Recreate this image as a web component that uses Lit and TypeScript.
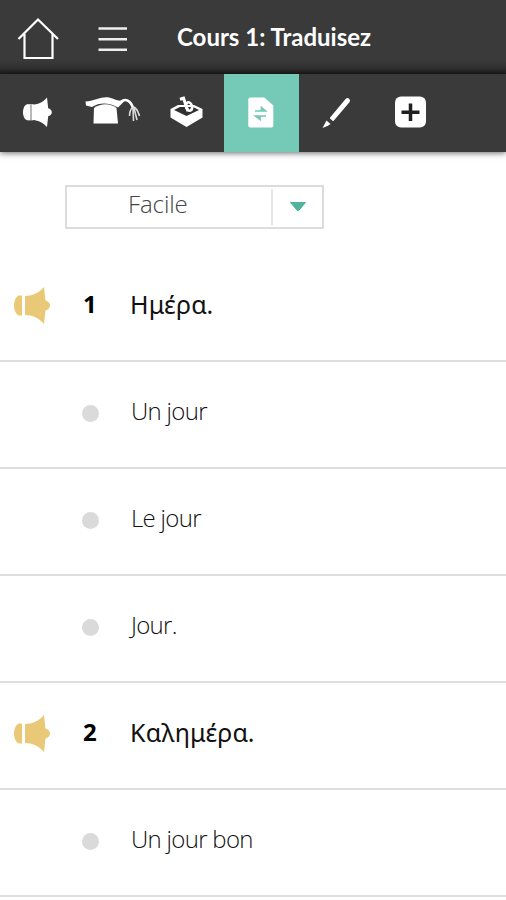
import { LitElement, html, css, svg } from "lit";
import { customElement } from "lit/decorators.js";
import { classMap } from "lit/directives/class-map.js";

interface Row {
  kind: "question" | "answer";
  text: string;
  num?: string;
}

const rows: Row[] = [
  { kind: "question", num: "1", text: "Ημέρα." },
  { kind: "answer", text: "Un jour" },
  { kind: "answer", text: "Le jour" },
  { kind: "answer", text: "Jour." },
  { kind: "question", num: "2", text: "Καλημέρα." },
  { kind: "answer", text: "Un jour bon" },
];

const horn = svg`
  <path d="M8 8.500H5C2 9.500 0 13.500 0 18.500S2 27.500 5 28.500H8Z"/>
  <path d="M11 9C18 9 25 6 30 0L31.500 13.500C34 14 36 16 36 18.500S34 23 31.500 23.500L30 37C25 31 18 28 11 28Z"/>`;

const tabs = [
  svg`<g transform="translate(23 23.500) scale(.8)">${horn}<path d="M7 8.500h6v20h-6z"/><path d="M10 9v19" stroke="#777" stroke-width="1.300"/></g>`,
  svg`<g><path d="M10.500 27.500C19 27 27 22 34 23.500C40 25 44 28 50 26.500L43 33.500C34 28.500 25 28 17 33L11 31.500Z"/>
    <path d="M19 34C26 29 35 29 41.500 34L43 49.500H18.500Z"/>
    <path d="M46 27.500C51 24 56 27 58 34" fill="none" stroke="#fff" stroke-width="2.600"/>
    <path d="M58 33C54.500 36 54.500 39 54.500 42M58 34L58.500 47M59 34L62 46M59 33C62.500 35 63 38 64.500 42" fill="none" stroke="#ddd" stroke-width="1.600"/></g>`,
  svg`<g><path d="M21.500 35L29 31H45L53.500 35V43.500L37.500 53L21.500 43.500Z"/>
    <path d="M25 36L31 33H44L50 36L37.500 42Z" fill="#303030"/>
    <path d="M31 25.200L34.500 24.200L39 37.200" fill="none" stroke="#fff" stroke-width="3"/>
    <ellipse cx="40" cy="32.500" rx="3" ry="4.300" transform="rotate(-18 40 32.500)" fill="none" stroke="#fff" stroke-width="2.700"/></g>`,
  svg`<g><path d="M27 23H41L50 31V51Q50 53 48 53H27Q25 53 25 51V25Q25 23 27 23Z" transform="translate(-.7 .5)"/>
    <path d="M31 37H41.500L37.500 33.500V36.500M42 42H31.500L36 45.500V42.500" fill="#75c9b7" stroke="#75c9b7" stroke-width="1.700"/></g>`,
  svg`<g><path d="M48.500 26.700L33 45" stroke="#fff" stroke-width="5" stroke-linecap="round"/>
    <path d="M28 43L34.500 49" stroke="#3a3a3a" stroke-width="1.800"/>
    <path d="M27.500 46.500L31.500 50L28.500 52L23.500 54Z"/></g>`,
  svg`<g><rect x="22" y="22.500" width="31" height="31" rx="6"/>
    <path d="M37.500 29.500V47M28.500 38.200H46.500" stroke="#202020" stroke-width="3.500"/></g>`,
];

@customElement("app-root")
export class AppRoot extends LitElement {
  static styles = css`
    :host { display: block; height: 900px; overflow: hidden; background: #fff; font-family: "Open Sans", sans-serif; }
    svg { display: block; fill: #fff; }
    .header { height: 74px; display: flex; background: linear-gradient(#3a3a3a 0 60px, #303030 68px, #1b1b1b 74px); color: #fff; }
    .title { font-family: Lato, sans-serif; margin-left: 41px; line-height: 74px; font-size: 24px; font-weight: 700; white-space: pre; }
    .tabs { height: 78px; display: flex; background: #3a3a3a; box-shadow: 0 1px 6px #0009; }
    .tab { width: 74.700px; height: 78px; }
    .active { background: #75c9b7; }
    .select { box-sizing: border-box; width: 259px; height: 44px; margin: 33px 0 0 65px; border: 2px solid #dcdcdc; display: flex; align-items: center; }
    .level { flex: 1; padding-left: 61px; line-height: 34px; height: 40px; font-size: 24px; font-weight: 300; color: #444; letter-spacing: -0.1px; }
    .arrow { width: 49px; height: 36px; border-left: 2px solid #e6e6e6; }
    .list { margin-top: 26px; }
    .row { box-sizing: border-box; height: 107px; border-bottom: 2px solid #dedede; display: flex; align-items: center; }
    .lead { width: 131px; display: flex; align-items: center; flex: none; padding-bottom: 5px; }
    .horn { margin: 0 33px 0 14px; fill: #e9c977; }
    .num { font: 700 24px "Noto Sans", sans-serif; color: #000; padding-bottom: 3px; }
    .dot { width: 17px; height: 17px; border-radius: 50%; background: #dadada; margin: 2px 0 0 82px; }
    .text { font-size: 24px; line-height: 34px; font-weight: 300; color: #111; white-space: pre; padding-bottom: 8px; letter-spacing: -0.700px; }
    .greek { font-family: "Noto Sans", sans-serif; font-size: 25px; font-weight: 400; color: #111; padding-bottom: 7px; letter-spacing: 0.200px; margin-left: -1px; }
  `;

  render() {
    return html`
      <div class="header">
        <svg width="136" height="74" viewBox="0 0 136 74">
          <path d="M18.500 39L38 19.500L58 39M24.500 34V58H52.500V34" fill="none" stroke="#fff" stroke-width="2.200"/>
          <path d="M98.500 28.500H127M98.500 39.200H127M98.500 49.800H127" stroke="#eee" stroke-width="2.600"/>
        </svg>
        <div class="title">Cours 1: Traduisez</div>
      </div>
      <div class="tabs">
        ${tabs.map((t, i) => html`<div class=${classMap({ tab: true, active: i === 3 })}>
          <svg width="75" height="78" viewBox="0 0 75 78">${t}</svg>
        </div>`)}
      </div>
      <div class="select">
        <div class="level">Facile</div>
        <div class="arrow"><svg width="49" height="36" viewBox="0 0 49 36"><path d="M17.500 13.500H32.500L25.800 21.500H24.300Z" fill="#4fb49d" stroke="#4fb49d" stroke-linejoin="round"/></svg></div>
      </div>
      <div class="list">
        ${rows.map((r) => html`<div class="row">
          <div class="lead">
            ${r.kind === "question"
              ? html`<svg class="horn" width="36" height="37" viewBox="0 0 36 37">${horn}</svg><span class="num">${r.num}</span>`
              : html`<span class="dot"></span>`}
          </div>
          <div class=${classMap({ text: true, greek: r.kind === "question" })}>${r.text}</div>
        </div>`)}
      </div>
    `;
  }
}
